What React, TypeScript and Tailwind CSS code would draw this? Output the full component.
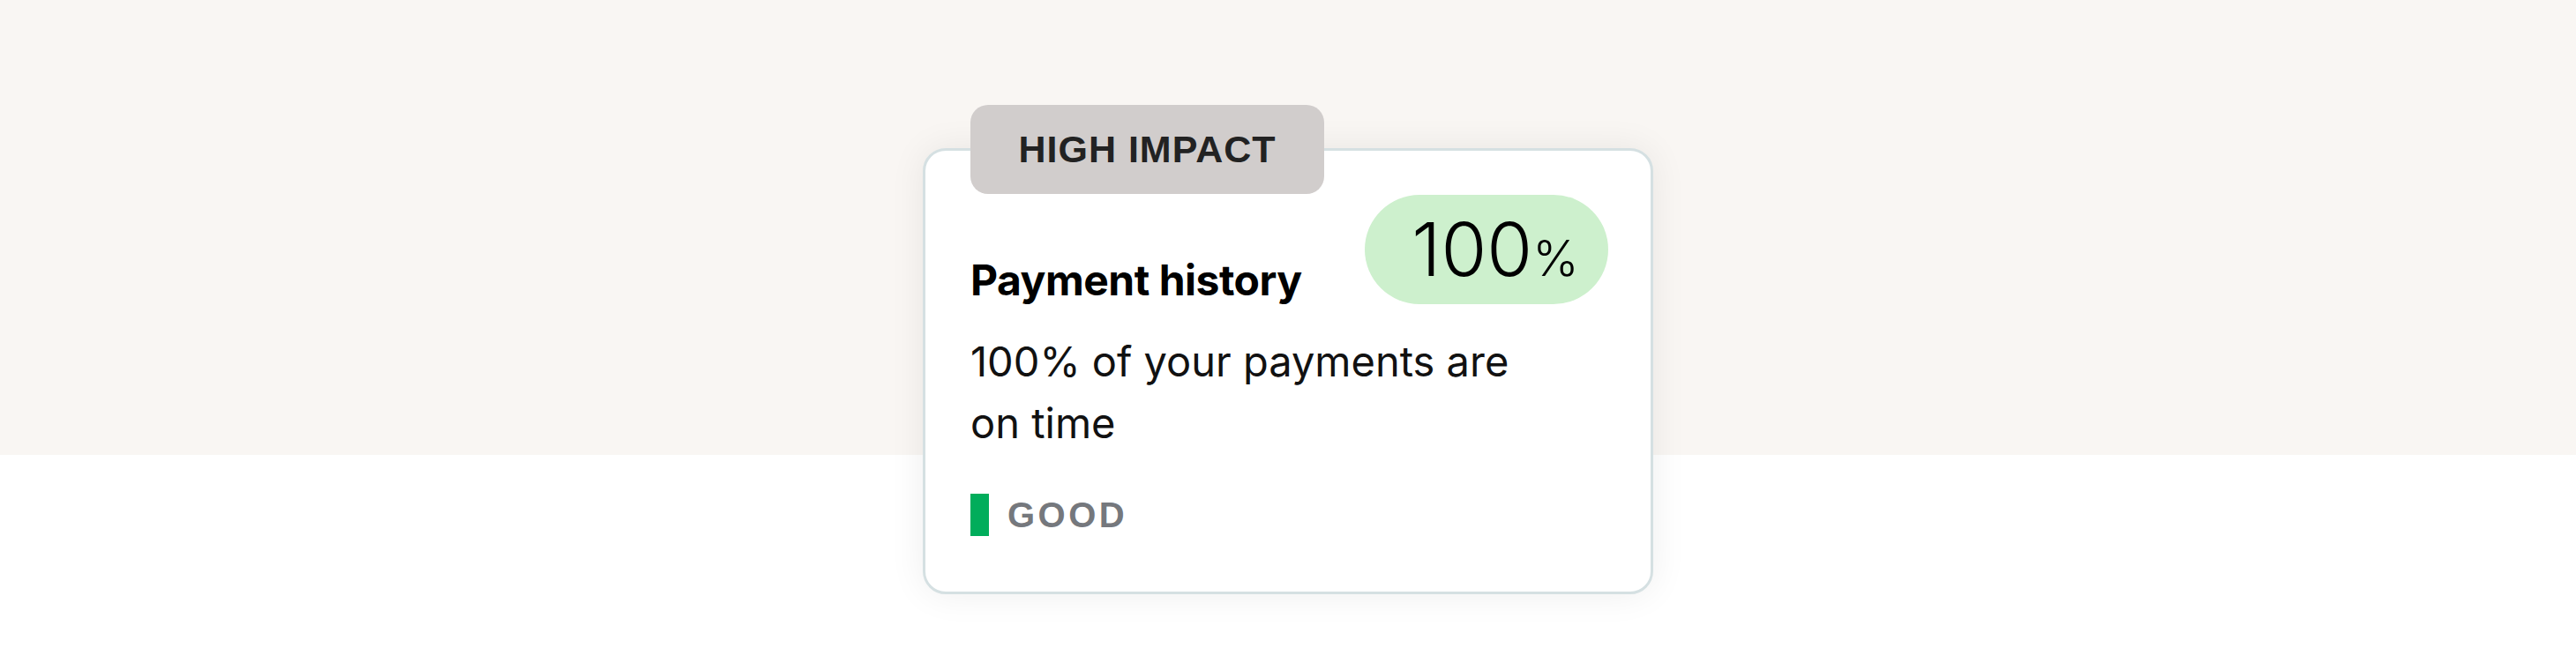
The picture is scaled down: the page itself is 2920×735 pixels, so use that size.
export default function App() {
  return (
    <div className="w-[2920px] h-[735px] overflow-hidden bg-[linear-gradient(to_bottom,#f9f6f3_0px,#f9f6f3_516px,#ffffff_516px)] pt-[168px] font-['Inter',sans-serif]">
      {/* Factor card */}
      <div className="relative ml-[1046px] w-[828px] h-[506px] rounded-[26px] border-[3px] border-[#d5e0e2] bg-white shadow-[0_0_40px_rgba(0,0,0,0.07)] pl-[51px] pr-[48px] pt-[50px]">
        <div className="absolute left-[51px] top-[-52px] h-[101px] w-[401px] rounded-[20px] bg-[#d1cdcc] flex items-center justify-center font-['Liberation_Sans',sans-serif] text-[43px] font-bold tracking-[1px] text-[#222]">
          HIGH IMPACT
        </div>

        <div className="flex items-end justify-between">
          <h2 className="text-[48px] leading-[60px] font-bold tracking-[-0.5px] text-black mb-[-3px]">Payment history</h2>
          <div className="h-[124px] w-[276px] rounded-full bg-[#cdf0cd] flex items-baseline justify-center pl-[20px] pt-[6px] text-black">
            <span className="text-[84px] leading-[112px] font-light">100</span>
            <span className="text-[56px] font-light">%</span>
          </div>
        </div>

        <p className="mt-[30px] text-[47px] leading-[70px] text-[#111] w-[660px]">
          100% of your payments are on time
        </p>

        <div className="mt-[39px] flex items-center gap-[21px]">
          <div className="h-[48px] w-[21px] bg-[#00ad5b]" />
          <span className="font-['Liberation_Sans',sans-serif] text-[40px] font-bold tracking-[3.5px] text-[#75787d]">GOOD</span>
        </div>
      </div>
    </div>
  );
}
